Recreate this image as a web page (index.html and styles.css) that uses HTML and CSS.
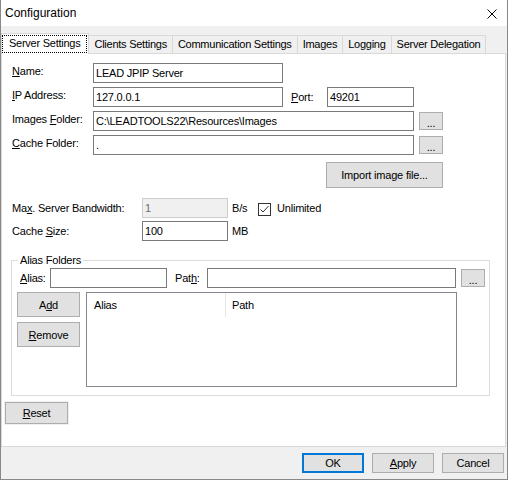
FILE: index.html
```html
<!DOCTYPE html>
<html lang="en">
<head>
    <meta charset="UTF-8">
    <title>Configuration</title>
    <link rel="stylesheet" href="styles.css">
</head>
<body>

<div class="window">
    <div class="titlebar">
        <span class="title">Configuration</span>
        <svg class="close" viewBox="0 0 10 10"><path d="M0.5 0.5 L9.5 9.5 M9.5 0.5 L0.5 9.5" /></svg>
    </div>

    <div class="client">
        <div class="tabs">
            <div class="tab active"><span class="focus">Server Settings</span></div>
            <div class="tab">Clients Settings</div>
            <div class="tab">Communication Settings</div>
            <div class="tab">Images</div>
            <div class="tab">Logging</div>
            <div class="tab">Server Delegation</div>
        </div>

        <!-- Server Settings page -->
        <div class="page">
            <div class="section">
                <div class="row">
                    <span class="label top"><u>N</u>ame:</span>
                    <div class="field w-name">LEAD JPIP Server</div>
                </div>
                <div class="row">
                    <span class="label top"><u>I</u>P Address:</span>
                    <div class="field w-name">127.0.0.1</div>
                    <span class="label-port"><u>P</u>ort:</span>
                    <div class="field w-port">49201</div>
                </div>
                <div class="row">
                    <span class="label top">Images <u>F</u>older:</span>
                    <div class="field w-folder">C:\LEADTOOLS22\Resources\Images</div>
                    <button class="btn browse">...</button>
                </div>
                <div class="row">
                    <span class="label top"><u>C</u>ache Folder:</span>
                    <div class="field w-folder">.</div>
                    <button class="btn browse">...</button>
                </div>

                <button class="btn import">Import image file...</button>

                <div class="row row-bw">
                    <span class="label wide">Ma<u>x</u>. Server Bandwidth:</span>
                    <div class="field w-size disabled">1</div>
                    <span class="unit">B/s</span>
                    <span class="check"><svg viewBox="0 0 11 11"><path d="M1.5 5.5 L4 8 L9.5 2" /></svg></span>
                    <span>Unlimited</span>
                </div>
                <div class="row row-cache">
                    <span class="label wide">Cache <u>S</u>ize:</span>
                    <div class="field w-size">100</div>
                    <span class="unit">MB</span>
                </div>
            </div>

            <fieldset class="group">
                <legend>Alias Folders</legend>
                <div class="row alias-row">
                    <span class="label-alias"><u>A</u>lias:</span>
                    <div class="field w-alias"></div>
                    <span class="label-path">Pat<u>h</u>:</span>
                    <div class="field w-path"></div>
                    <button class="btn browse">...</button>
                </div>
                <div class="alias-body">
                    <div class="alias-buttons">
                        <button class="btn side">A<u>d</u>d</button>
                        <button class="btn side"><u>R</u>emove</button>
                    </div>
                    <div class="list">
                        <div class="list-head">
                            <div class="col col-alias">Alias</div>
                            <div class="col">Path</div>
                        </div>
                    </div>
                </div>
            </fieldset>

            <button class="btn reset"><u>R</u>eset</button>
        </div>

        <div class="footer">
            <button class="btn default">OK</button>
            <button class="btn"><u>A</u>pply</button>
            <button class="btn">Cancel</button>
        </div>
    </div>
</div>

</body>
</html>
```

FILE: styles.css
```css
/* base */
* {
    box-sizing: border-box;
}
body {
    margin: 0;
    font-family: "Liberation Sans", Arial, sans-serif;
    font-size: 11px;
    letter-spacing: -0.2px;
    color: #000;
}
u {
    text-decoration-thickness: 1px;
    text-underline-offset: 1px;
}

/* window frame */
.window {
    width: 508px;
    height: 480px;
    border: 1px solid #888;
    border-top: 0;
    background: #f0f0f0;
}
.titlebar {
    height: 26px;
    background: #fff;
    display: flex;
    align-items: center;
    justify-content: space-between;
    padding: 0 10px 0 4px;
}
.title {
    font-size: 12px;
    letter-spacing: 0;
    line-height: 26px;
}
.close {
    width: 10px;
    height: 10px;
    margin-top: 1px;
}
.close path {
    stroke: #000;
    stroke-width: 1;
    fill: none;
}

/* tabs */
.tabs {
    display: flex;
    align-items: flex-end;
    height: 27px;
    letter-spacing: -0.25px;
}
.tab {
    height: 18px;
    padding: 0 5px;
    line-height: 17px;
    border: 1px solid #d9d9d9;
    border-bottom: 0;
    margin-left: -1px;
    background: #f0f0f0;
    white-space: nowrap;
}
.tab.active {
    height: 21px;
    margin-left: 0;
    margin-bottom: -1px;
    padding: 0 1px 0 0;
    background: #fff;
    position: relative;
    z-index: 1;
}
.tab.active .focus {
    display: block;
    margin-top: 1px;
    height: 18px;
    padding: 0 6px;
    line-height: 15px;
    border: 1px dotted #000;
}
.page {
    height: 394px;
    margin-right: 1px;
    padding-top: 9px;
    background: #fff;
    border: 1px solid #d9d9d9;
}
.section {
    padding-left: 10px;
}

/* rows and fields */
.row {
    display: flex;
    align-items: center;
    height: 20px;
    margin-top: 4px;
}
.row:first-child {
    margin-top: 0;
}
.label {
    width: 81px;
    white-space: nowrap;
}
.label.top {
    align-self: flex-start;
    padding-top: 2px;
    line-height: 13px;
}
.label.wide {
    width: 130px;
}
.label-port {
    width: 36px;
    margin-left: 8px;
}
.field {
    height: 20px;
    padding: 0 2px;
    line-height: 18px;
    border: 1px solid #7a7a7a;
    background: #fff;
    white-space: nowrap;
    overflow: hidden;
}
.field.disabled {
    background: #f0f0f0;
    border-color: #ccc;
    color: #6d6d6d;
}
.w-name { width: 190px; }
.w-port { width: 87px; }
.w-folder { width: 321px; }
.w-size { width: 86px; }
.w-alias { width: 117px; }
.w-path { width: 249px; }

/* buttons */
.btn {
    font: inherit;
    letter-spacing: inherit;
    color: #000;
    background: #e1e1e1;
    border: 1px solid #adadad;
    padding: 0;
}
.browse {
    width: 24px;
    height: 18px;
    margin-left: 5px;
    padding-top: 3px;
    line-height: 12px;
}
.import {
    display: block;
    width: 117px;
    height: 26px;
    margin: 7px 0 0 314px;
}
.row-bw {
    margin-top: 10px;
}
.row-cache {
    margin-top: 3px;
}
.unit {
    width: 26px;
    margin-left: 4px;
}
.check {
    width: 13px;
    height: 13px;
    margin: 3px 6px 0 0;
    border: 1px solid #333;
    background: #fff;
}
.check svg {
    display: block;
    width: 11px;
    height: 11px;
}
.check path {
    stroke: #333;
    stroke-width: 1;
    fill: none;
}

/* alias group */
.group {
    width: 479px;
    min-width: 0;
    margin: 13px 0 0 9px;
    padding: 0 0 8px 0;
    border: 1px solid #dcdcdc;
}
.group legend {
    margin-left: 6px;
    padding: 0 2px;
    line-height: 13px;
}
.alias-row {
    margin-top: 1px;
    padding-left: 8px;
}
.label-alias {
    width: 30px;
}
.label-path {
    width: 32px;
    margin-left: 8px;
}
.alias-body {
    display: flex;
    margin-top: 4px;
    padding-left: 5px;
}
.alias-buttons {
    display: flex;
    flex-direction: column;
    gap: 5px;
}
.side {
    width: 63px;
    height: 25px;
}
.list {
    width: 371px;
    height: 95px;
    margin-left: 6px;
    border: 1px solid #828790;
    background: #fff;
}
.list-head {
    display: flex;
    height: 24px;
}
.col {
    padding-left: 6px;
    line-height: 24px;
}
.col-alias {
    width: 139px;
    padding-left: 7px;
    border-right: 1px solid #e5e5e5;
}
.reset {
    display: block;
    width: 63px;
    height: 22px;
    margin: 6px 0 0 3px;
    box-shadow: 0 0 0 1px #f0f0f0;
}

/* dialog buttons */
.footer {
    display: flex;
    justify-content: flex-end;
    gap: 8px;
    padding: 6px 3px 0 0;
}
.footer .btn {
    width: 62px;
    height: 20px;
}
.footer .btn.default {
    border: 2px solid #0078d7;
}
```
